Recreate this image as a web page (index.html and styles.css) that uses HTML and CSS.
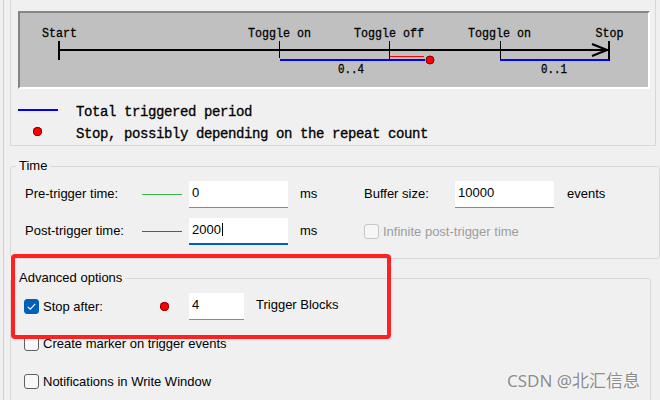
FILE: index.html
```html
<!DOCTYPE html>
<html>
<head>
<meta charset="utf-8">
<link rel="stylesheet" href="styles.css">
</head>
<body>
<div class="screen">
  <div class="inner">
    <section class="overview">
      <div class="panel">
        <svg width="628" height="74" viewBox="0 0 628 74">
          <g fill="#000">
            <rect x="39" y="36" width="550" height="2"/>
            <rect x="38" y="28" width="2" height="19"/>
            <rect x="259" y="28" width="1" height="17"/>
            <rect x="369" y="28" width="1" height="18"/>
            <rect x="480" y="28" width="1" height="18"/>
            <rect x="588" y="28" width="2" height="20"/>
          </g>
          <polyline points="572,31 587,37 572,43" fill="none" stroke="#000" stroke-width="2.2"/>
          <rect x="260" y="46" width="145" height="2" fill="#0000ff"/>
          <rect x="480" y="46" width="109" height="2" fill="#0000ff"/>
          <rect x="370" y="43" width="34" height="1" fill="#ff0000"/>
          <circle cx="410" cy="47" r="4" fill="#ff0000" stroke="#7a0000" stroke-width="1"/>
          <g class="dtext">
            <text x="22" y="24" textLength="35" lengthAdjust="spacingAndGlyphs">Start</text>
            <text x="228" y="24" textLength="63" lengthAdjust="spacingAndGlyphs">Toggle on</text>
            <text x="334" y="24" textLength="70" lengthAdjust="spacingAndGlyphs">Toggle off</text>
            <text x="448" y="24" textLength="63" lengthAdjust="spacingAndGlyphs">Toggle on</text>
            <text x="575.5" y="24" textLength="28" lengthAdjust="spacingAndGlyphs">Stop</text>
            <text x="318" y="60" textLength="26" lengthAdjust="spacingAndGlyphs">0..4</text>
            <text x="521" y="60" textLength="26" lengthAdjust="spacingAndGlyphs">0..1</text>
          </g>
        </svg>
      </div>
      <div class="legend">
        <div class="lrow"><span class="mk"><span class="bl"></span></span><span class="lt">Total triggered period</span></div>
        <div class="lrow"><span class="mk"><span class="ldot"></span></span><span class="lt">Stop, possibly depending on the repeat count</span></div>
      </div>
    </section>

    <fieldset class="grp time">
      <legend>Time</legend>
      <div class="tgrid">
        <span class="lbl">Pre-trigger time:</span>
        <span class="seg green"></span>
        <div class="field">0</div>
        <span class="lbl">ms</span>
        <span class="lbl">Buffer size:</span>
        <div class="field">10000</div>
        <span class="lbl">events</span>

        <span class="lbl">Post-trigger time:</span>
        <span class="seg redl"></span>
        <div class="field focus">2000<span class="caret"></span></div>
        <span class="lbl">ms</span>
        <div class="chk dis span3"><span class="box"></span><span>Infinite post-trigger time</span></div>
      </div>
    </fieldset>

    <fieldset class="grp adv">
      <legend>Advanced options</legend>
      <div class="arows">
        <div class="arow">
          <div class="chk stopchk"><span class="box on"><svg width="15" height="15" viewBox="0 0 15 15"><polyline points="3.8,7.8 6.3,10.2 11.2,4.8" fill="none" stroke="#fff" stroke-width="1.1"/></svg></span><span>Stop after:</span></div>
          <span class="adot"></span>
          <div class="field sm">4</div>
          <span class="tb">Trigger Blocks</span>
        </div>
        <div class="arow">
          <div class="chk"><span class="box"></span><span>Create marker on trigger events</span></div>
        </div>
        <div class="arow last">
          <div class="chk"><span class="box"></span><span>Notifications in Write Window</span></div>
        </div>
      </div>
    </fieldset>
  </div>
  <div class="annot"></div>
  <div class="wm">CSDN @北汇信息</div>
</div>
</body>
</html>
```
FILE: styles.css
```css
html, body {
  margin: 0;
  padding: 0;
}
body {
  background: #f0f0f0;
  font: 13px "Liberation Sans", Arial, sans-serif;
  color: #000;
}
.screen {
  position: relative;
  width: 660px;
  height: 400px;
  overflow: hidden;
  background: #f0f0f0;
}
.inner {
  margin-left: 3px;
  border-left: 1px solid #d0d0d0;
  padding-left: 6px;
  height: 100%;
  box-sizing: border-box;
}
.overview {
  width: 646px;
  height: 146px;
  box-sizing: border-box;
  border-left: 1px solid #d8d8d8;
  border-right: 1px solid #d8d8d8;
  border-bottom: 1px solid #d8d8d8;
  padding: 11px 0 0 7px;
}
.panel {
  width: 632px;
  height: 78px;
  box-sizing: border-box;
  border: 2px solid;
  border-color: #858585 #ffffff #ffffff #858585;
  background: #c0c0c0;
}
.panel svg {
  display: block;
}
.dtext text {
  font-family: "Liberation Mono", "Courier New", monospace;
  font-size: 13px;
  fill: #000;
  stroke: #000;
  stroke-width: 0.3px;
}
.legend {
  margin-top: 12px;
}
.lrow {
  display: flex;
  height: 22px;
}
.mk {
  width: 58px;
  flex: none;
}
.bl {
  display: block;
  width: 40px;
  height: 2px;
  background: #0000ff;
  margin-top: 8px;
}
.ldot {
  display: block;
  width: 9px;
  height: 9px;
  border-radius: 50%;
  background: #ff0000;
  box-shadow: inset 0 0 0 1px #8a0000;
  margin: 3.5px 0 0 15px;
}
.lt {
  font: 14px "Liberation Mono", "Courier New", monospace;
  letter-spacing: -0.4px;
  line-height: 22px;
  white-space: pre;
  -webkit-text-stroke: 0.3px #000;
}
.grp {
  margin: 0;
  padding: 0;
  border: 1px solid #d8d8d8;
  border-radius: 3px;
  box-sizing: border-box;
  min-width: 0;
}
.grp legend {
  margin-left: 5px;
  padding: 0 3px;
  line-height: 16px;
  font-size: 13px;
}
.time {
  width: 650px;
  margin-top: 12px;
}
.adv {
  width: 641px;
  height: 150px;
  margin-top: 11px;
}
.tgrid {
  display: grid;
  grid-template-columns: 117px 47px 111px 64px 91px 112px auto;
  grid-auto-rows: 27px;
  row-gap: 10px;
  padding: 7px 0 13px 14px;
  align-items: center;
}
.lbl {
  padding-bottom: 3px;
  white-space: nowrap;
}
.seg {
  display: block;
  width: 40px;
  height: 1px;
}
.green {
  background: #3cb44b;
}
.redl {
  background: #f01c1c;
}
.field {
  width: 99px;
  height: 27px;
  box-sizing: border-box;
  background: #ffffff;
  border-bottom: 1px solid #8a8a8a;
  padding: 0 3px 3px;
  display: flex;
  align-items: center;
  white-space: nowrap;
}
.field.focus {
  border-bottom: 2px solid #005fb8;
  padding-bottom: 2px;
}
.field.sm {
  width: 55px;
  margin-left: 20px;
}
.caret {
  width: 1px;
  height: 13px;
  background: #000;
  margin-left: 1px;
}
.chk {
  display: flex;
  align-items: center;
  gap: 4px;
  white-space: nowrap;
}
.span3 {
  grid-column: 5 / span 3;
}
.box {
  width: 15px;
  height: 15px;
  box-sizing: border-box;
  border: 1px solid #5f5f5f;
  border-radius: 3px;
  background: #f8f8f8;
  flex: none;
  display: block;
}
.box svg {
  display: block;
  margin: -1px;
}
.box.on {
  background: #005fb8;
  border-color: #005fb8;
}
.dis {
  color: #9d9d9d;
}
.dis .box {
  border-color: #c6c6c6;
  background: #f6f6f6;
}
.arows {
  display: flex;
  flex-direction: column;
  gap: 10px;
  padding: 7px 0 0 13px;
}
.arow {
  display: flex;
  align-items: center;
  height: 27px;
}
.arow.last {
  margin-top: 1px;
}
.stopchk {
  width: 136px;
}
.adot {
  width: 9px;
  height: 9px;
  border-radius: 50%;
  background: #ff0000;
  box-shadow: inset 0 0 0 1px #8a0000;
  flex: none;
}
.tb {
  margin-left: 12px;
  padding-bottom: 5px;
}
.annot {
  position: absolute;
  left: 11px;
  top: 254px;
  width: 380px;
  height: 85px;
  box-sizing: border-box;
  border: 4px solid #ff2121;
  border-radius: 4px;
}
.wm {
  position: absolute;
  left: 507px;
  top: 369px;
  font: 17px "Noto Sans", "Noto Sans CJK SC", sans-serif;
  line-height: 24px;
  color: #8c8c8c;
  text-shadow: 0 0 2px #ffffff;
  white-space: nowrap;
}
```
